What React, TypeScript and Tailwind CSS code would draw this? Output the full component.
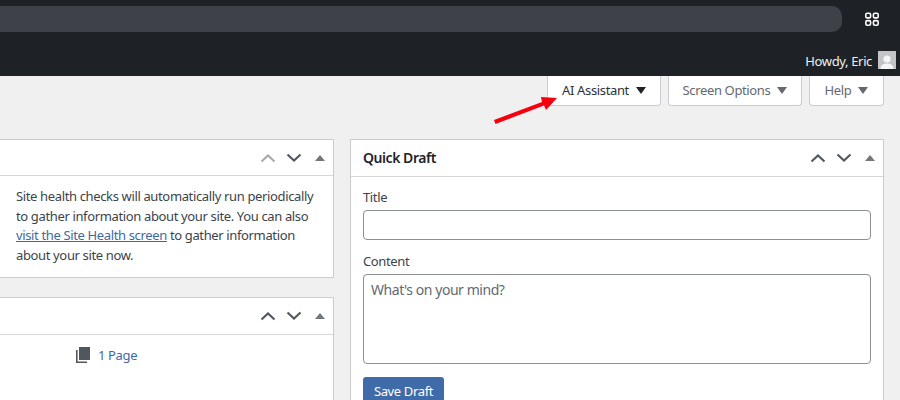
const FONT = "font-['Noto_Sans','Open_Sans',sans-serif]";

function Up({ className = "" }: { className?: string }) {
  return (
    <svg width="16" height="10" viewBox="0 0 16 10" className={className} fill="none" stroke="currentColor" strokeWidth="2.1">
      <path d="M1.5 8.5 L8 2.5 L14.5 8.5" />
    </svg>
  );
}
function Down({ className = "" }: { className?: string }) {
  return (
    <svg width="16" height="10" viewBox="0 0 16 10" className={className} fill="none" stroke="currentColor" strokeWidth="2.1">
      <path d="M1.5 1.5 L8 7.5 L14.5 1.5" />
    </svg>
  );
}
function Controls({ upClass = "text-[#50575e]" }: { upClass?: string }) {
  return (
    <div className="flex items-center text-[#50575e]">
      <Up className={upClass} />
      <Down className="ml-[10px]" />
      <span className="ml-[13px] mr-[7px] h-0 w-0 border-x-[5px] border-b-[6px] border-x-transparent border-b-[#72777c]" />
    </div>
  );
}
function TabButton({ label, dark, width }: { label: string; dark?: boolean; width: string }) {
  return (
    <div className={`flex h-[30px] items-center justify-center rounded-b-[4px] border border-t-0 border-[#c9ccd0] bg-white text-[13px] ${width} ${dark ? "text-[#2c3338]" : "text-[#646970]"}`}>
      {label}
      <span className={`ml-[7px] h-0 w-0 border-x-[5px] border-t-[7px] border-x-transparent ${dark ? "border-t-[#1d2327]" : "border-t-[#646970]"}`} />
    </div>
  );
}

export default function App() {
  return (
    <div className={`${FONT} h-[400px] w-[900px] overflow-hidden bg-[#f0f0f1] text-[13px] tracking-[-0.36px] text-[#3c434a]`}>
      <div className="bg-[#1e2226]">
        <div className="flex h-[46px] items-start">
          <div className="mt-[6px] h-[26px] w-[842px] rounded-r-[10px] bg-[#3e4148]" />
          <svg className="ml-[22px] mt-[12px]" width="16" height="15" viewBox="0 0 16 15" fill="none" stroke="#ffffff" strokeWidth="1.6">
            <rect x="1.8" y="1.3" width="4.8" height="4.6" rx="1.5" />
            <rect x="9.4" y="1.3" width="4.8" height="4.6" rx="1.5" />
            <rect x="1.8" y="8.6" width="4.8" height="4.6" rx="1.5" />
            <rect x="9.4" y="8.6" width="4.8" height="4.6" rx="1.5" />
          </svg>
        </div>
        <div className="flex h-[30px] items-start justify-end pr-[4px] pt-[5px] text-[13px] text-[#f0f0f1]">
          <span className="leading-[20px]">Howdy, Eric</span>
          <span className="ml-[6px] flex h-[18px] w-[18px] items-end justify-center overflow-hidden bg-[#c3c4c7]">
            <svg width="16" height="16" viewBox="0 0 16 16" fill="#f5f5f5">
              <circle cx="8" cy="6" r="3.6" />
              <path d="M1.5 16c0-4 3-5.5 6.5-5.5s6.5 1.5 6.5 5.5z" />
            </svg>
          </span>
        </div>
      </div>

      <div className="relative flex justify-end gap-[7px] pr-[16px]">
        <TabButton label="AI Assistant" dark width="w-[114px]" />
        <TabButton label="Screen Options" width="w-[134px]" />
        <TabButton label="Help" width="w-[75px]" />
        <svg className="absolute left-[490px] top-[14px]" width="72" height="40" viewBox="0 0 72 40" fill="#f5000f">
          <path d="M4 30 L52 12 L51 7 L67 8 L56 20 L54 15.5 L5.5 34 Z" />
        </svg>
      </div>

      <div className="mt-[33px] flex items-start pr-[16px]">
        <div className="flex w-[334px] shrink-0 flex-col gap-[19px]">
          <section className="border border-l-0 border-[#c9ccd0] bg-white">
            <header className="flex h-[36px] items-center justify-end border-b border-[#d4d6d9] pr-[1px]">
              <Controls upClass="text-[#a7aaad]" />
            </header>
            <div className="h-[101px] pl-[16px] pr-[12px] pt-[11px] leading-[19.7px]">
              <p>Site health checks will automatically run periodically</p>
              <p>to gather information about your site. You can also</p>
              <p>
                <span className="text-[#3f68a3] underline">visit the Site Health screen</span> to gather information
              </p>
              <p>about your site now.</p>
            </div>
          </section>
          <section className="h-[120px] border border-l-0 border-[#c9ccd0] bg-white">
            <header className="flex h-[37px] items-center justify-end border-b border-[#d4d6d9] pr-[1px]">
              <Controls />
            </header>
            <div className="flex items-center pl-[75px] pt-[10px] text-[#3f68a3]">
              <svg width="15" height="17" viewBox="0 0 15 17" fill="#50575e">
                <path d="M4 0h11v13H4z" />
                <path d="M1 3h1.6v11.4H12V16H1z" />
              </svg>
              <span className="ml-[8px] leading-[20px]">1 Page</span>
            </div>
          </section>
        </div>

        <section className="ml-[16px] h-[300px] flex-1 border border-[#c9ccd0] bg-white">
          <header className="flex h-[37px] items-center justify-between border-b border-[#d4d6d9] pl-[12px] pr-[1px]">
            <h2 className="pb-[2px] text-[14px] font-semibold tracking-[-0.45px] text-[#1d2327]">Quick Draft</h2>
            <Controls />
          </header>
          <div className="px-[12px] pt-[11px]">
            <label className="block leading-[19px]">Title</label>
            <div className="mt-[3px] h-[30px] rounded-[4px] border border-[#8c8f94] bg-white" />
            <label className="mt-[12px] block leading-[19px]">Content</label>
            <div className="mt-[3px] h-[90px] rounded-[4px] border border-[#8c8f94] bg-white px-[7px] py-[5px] text-[14px] leading-[20px] tracking-[-0.45px] text-[#646970]">
              What's on your mind?
            </div>
            <div className="mt-[13px] flex h-[30px] w-[81px] items-center justify-center rounded-[3px] bg-[#3f6ba8] text-white">
              Save Draft
            </div>
          </div>
        </section>
      </div>
    </div>
  );
}
